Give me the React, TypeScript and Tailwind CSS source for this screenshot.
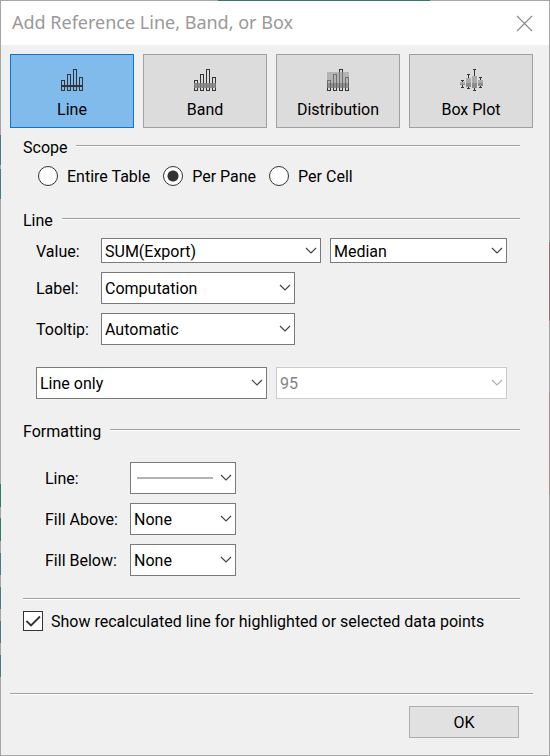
import { useId, useState } from "react";
import type { ReactNode } from "react";

type Kind = "line" | "band" | "distribution" | "box";

const bars = [
  { x: 0, y: 11 },
  { x: 6, y: 5 },
  { x: 12, y: 0 },
  { x: 18, y: 8 },
];

const boxes = [
  { x: 0, top: 11, bottom: 18, boxTop: 13, mid: 15, boxBottom: 15 },
  { x: 6, top: 5, bottom: 19, boxTop: 9, mid: 14, boxBottom: 17 },
  { x: 12, top: 0, bottom: 21, boxTop: 7, mid: 14, boxBottom: 18 },
  { x: 18, top: 8, bottom: 18, boxTop: 11, mid: 14, boxBottom: 16 },
];

function KindIcon({ kind }: { kind: Kind }) {
  if (kind === "box") {
    return (
      <svg width="23" height="22" viewBox="0 0 23 22" shapeRendering="crispEdges" aria-hidden="true">
        {boxes.map((b) => (
          <g key={b.x}>
            <rect x={b.x + 1} y={b.top} width="3" height="1" fill="#333" />
            <rect x={b.x + 1} y={b.bottom} width="3" height="1" fill="#333" />
            <rect x={b.x + 2} y={b.top} width="1" height={b.bottom - b.top} fill="#333" />
            <rect x={b.x} y={b.boxTop} width="5" height={b.mid - b.boxTop} fill="#aaa" />
            <rect x={b.x} y={b.mid} width="5" height={b.boxBottom - b.mid + 1} fill="#8c8c8c" />
          </g>
        ))}
      </svg>
    );
  }
  return (
    <svg width="22" height="22" viewBox="0 0 22 22" shapeRendering="crispEdges" aria-hidden="true">
      {bars.map((b) => (
        <rect key={b.x} x={b.x + 0.5} y={b.y + 0.5} width="3" height={21 - b.y} fill="none" stroke="#333" />
      ))}
      {kind === "line" && <rect y="16" width="22" height="2" fill="#333" />}
      {kind === "band" && <rect y="14" width="22" height="5" fill="#808080" fillOpacity="0.85" />}
      {kind === "distribution" && (
        <>
          <rect y="3" width="22" height="11" fill="#999" fillOpacity="0.6" />
          <rect y="14" width="22" height="5" fill="#777" fillOpacity="0.75" />
        </>
      )}
    </svg>
  );
}

function Rule({ className = "" }: { className?: string }) {
  return <div className={`h-[2px] border-t border-[#a0a0a0] bg-white ${className}`} />;
}

function GroupTitle({ children }: { children: ReactNode }) {
  return (
    <div className="flex h-[22px] items-center gap-[9px]">
      <h2 className="leading-5">{children}</h2>
      <Rule className="mb-1 flex-1" />
    </div>
  );
}

interface DropDownProps {
  id?: string;
  label?: string;
  options: string[];
  className: string;
  disabled?: boolean;
  swatch?: boolean;
}

function DropDown({ id, label, options, className, disabled, swatch }: DropDownProps) {
  return (
    <div className={`relative ${className}`}>
      <select
        id={id}
        aria-label={label}
        disabled={disabled}
        className={`block h-full w-full appearance-none border border-[#7a7a7a] bg-white pt-[2px] pr-6 pl-[3px] disabled:border-[#ccc] disabled:text-[#838383] disabled:opacity-100 ${swatch ? "text-transparent" : "text-black"}`}
      >
        {options.map((o) => (
          <option key={o}>{o}</option>
        ))}
      </select>
      {swatch && (
        <span className="pointer-events-none absolute top-[15px] right-[23px] left-[7px] h-[2px] bg-[#b3b3b3]" />
      )}
      <svg
        className="pointer-events-none absolute inset-y-0 right-1 my-auto"
        width="12"
        height="8"
        viewBox="0 0 12 8"
        fill="none"
        stroke={disabled ? "#b0b0b0" : "#444"}
        strokeWidth="1.2"
        aria-hidden="true"
      >
        <path d="M1 1l5 5 5-5" />
      </svg>
    </div>
  );
}

interface FieldProps extends DropDownProps {
  title: string;
  titleWidth: string;
  children?: ReactNode;
}

function Field({ title, titleWidth, children, ...rest }: FieldProps) {
  const id = useId();
  return (
    <div className="flex items-center">
      <label htmlFor={id} className={`shrink-0 pt-[2px] ${titleWidth}`}>
        {title}
      </label>
      <DropDown id={id} {...rest} />
      {children}
    </div>
  );
}

const kinds: { kind: Kind; name: string }[] = [
  { kind: "line", name: "Line" },
  { kind: "band", name: "Band" },
  { kind: "distribution", name: "Distribution" },
  { kind: "box", name: "Box Plot" },
];

export default function App() {
  const [kind, setKind] = useState<Kind>("line");
  const [scope, setScope] = useState("Per Pane");

  return (
    <div className="flex min-h-screen flex-col bg-[#a6a6a6] bg-[linear-gradient(90deg,transparent_218px,#2b7d68_218px,#2b7d68_430px,transparent_430px),linear-gradient(180deg,transparent_135px,#4c7889_135px,#4c7889_165px,transparent_165px,transparent_169px,#4c7889_169px,#4c7889_199px,transparent_199px,transparent_484px,#2b7d68_484px,#2b7d68_507px,transparent_507px,transparent_518px,#2b7d68_518px,#2b7d68_541px,transparent_541px,transparent_553px,#4c7889_553px,#4c7889_575px,transparent_575px,transparent_587px,#4c7889_587px,#4c7889_609px,transparent_609px,transparent_621px,#4c7889_621px,#4c7889_643px,transparent_643px,transparent_655px,#4c7889_655px,#4c7889_677px,transparent_677px),linear-gradient(180deg,transparent_242px,#a06c74_242px,#a06c74_321px,transparent_321px,transparent_392px,#b08a85_392px,#b08a85_494px,transparent_494px)] bg-[length:100%_1px,1px_100%,1px_100%] bg-[position:0_0,0_0,100%_0] bg-no-repeat p-px font-['Roboto','Liberation_Sans',sans-serif] text-[16px] leading-5 text-black">
      <main className="flex flex-1 flex-col bg-[#f0f0f0]">
        <header className="flex h-11 items-center justify-between bg-white pr-4 pl-[11px]">
          <h1 className="pb-[2px] font-['Noto_Sans','Open_Sans',sans-serif] text-[18px] text-[#999]">
            Add Reference Line, Band, or Box
          </h1>
          <button type="button" aria-label="Close">
            <svg width="17" height="17" viewBox="0 0 17 17" stroke="#888" strokeWidth="1.1" aria-hidden="true">
              <path d="M1 1l15 15M16 1L1 16" />
            </svg>
          </button>
        </header>

        <div className="flex flex-1 flex-col pr-4 pl-[9px]">
          <div className="mt-[9px] grid grid-cols-4 gap-[9px]">
            {kinds.map((k) => (
              <button
                key={k.kind}
                type="button"
                aria-pressed={kind === k.kind}
                onClick={() => setKind(k.kind)}
                className={`flex h-[74px] flex-col items-center border pt-[14px] ${kind === k.kind ? "border-[#0078d7] bg-[#80bbeb]" : "border-[#a0a0a0] bg-[#dcdcdc]"}`}
              >
                <KindIcon kind={k.kind} />
                <span className="mt-[9px]">{k.name}</span>
              </button>
            ))}
          </div>

          <div className="pr-[13px] pl-[13px]">
            <section className="mt-[9px]">
              <GroupTitle>Scope</GroupTitle>
              <div className="mt-[6px] ml-[15px] flex gap-[13px]">
                {["Entire Table", "Per Pane", "Per Cell"].map((s) => (
                  <label key={s} className="flex items-center gap-[9px]">
                    <input
                      type="radio"
                      name="scope"
                      checked={scope === s}
                      onChange={() => setScope(s)}
                      className="size-5 appearance-none rounded-full border border-[#333] bg-white checked:bg-[radial-gradient(circle,#333_5px,white_6px)]"
                    />
                    <span className="pt-[2px]">{s}</span>
                  </label>
                ))}
              </div>
            </section>

            <section className="mt-[23px]">
              <GroupTitle>Line</GroupTitle>
              <div className="mt-[6px] mr-[13px] ml-[13px] flex flex-col gap-[9px]">
                <Field
                  title="Value:"
                  titleWidth="w-[65px]"
                  options={["SUM(Export)"]}
                  className="h-[25px] flex-[220]"
                >
                  <DropDown label="Aggregation" options={["Median"]} className="ml-[9px] h-[25px] flex-[177]" />
                </Field>
                <Field title="Label:" titleWidth="w-[65px]" options={["Computation"]} className="h-8 w-[194px]" />
                <Field title="Tooltip:" titleWidth="w-[65px]" options={["Automatic"]} className="h-8 w-[194px]" />
              </div>
              <div className="mt-[22px] mr-[13px] ml-[13px] flex gap-[9px]">
                <DropDown label="Line display" options={["Line only"]} className="h-8 flex-1" />
                <DropDown label="Confidence" options={["95"]} className="h-8 flex-1" disabled />
              </div>
            </section>

            <section className="mt-[22px]">
              <GroupTitle>Formatting</GroupTitle>
              <div className="mt-[19px] ml-[22px] flex flex-col gap-[9px]">
                <Field title="Line:" titleWidth="w-[85px]" options={["Solid"]} className="h-8 w-[106px]" swatch />
                <Field title="Fill Above:" titleWidth="w-[85px]" options={["None"]} className="h-8 w-[106px]" />
                <Field title="Fill Below:" titleWidth="w-[85px]" options={["None"]} className="h-8 w-[106px]" />
              </div>
            </section>

            <Rule className="mt-[22px]" />
            <label className="mt-[10px] flex items-center gap-2">
              <span className="relative size-5 shrink-0">
                <input
                  type="checkbox"
                  defaultChecked
                  className="peer block size-5 appearance-none border border-[#333] bg-white"
                />
                <svg
                  className="pointer-events-none absolute inset-0 hidden peer-checked:block"
                  width="20"
                  height="20"
                  viewBox="0 0 20 20"
                  fill="none"
                  stroke="#333"
                  strokeWidth="1.8"
                  aria-hidden="true"
                >
                  <path d="M3.5 10l4.5 4.5 9-9" />
                </svg>
              </span>
              <span className="pt-[2px]">Show recalculated line for highlighted or selected data points</span>
            </label>
          </div>

          <footer className="mt-auto pb-[17px]">
            <Rule />
            <div className="mt-[11px] flex justify-end pr-[14px]">
              <button type="button" className="h-8 w-[110px] border border-[#adadad] bg-[#e1e1e1] pt-[2px]">
                OK
              </button>
            </div>
          </footer>
        </div>
      </main>
    </div>
  );
}
